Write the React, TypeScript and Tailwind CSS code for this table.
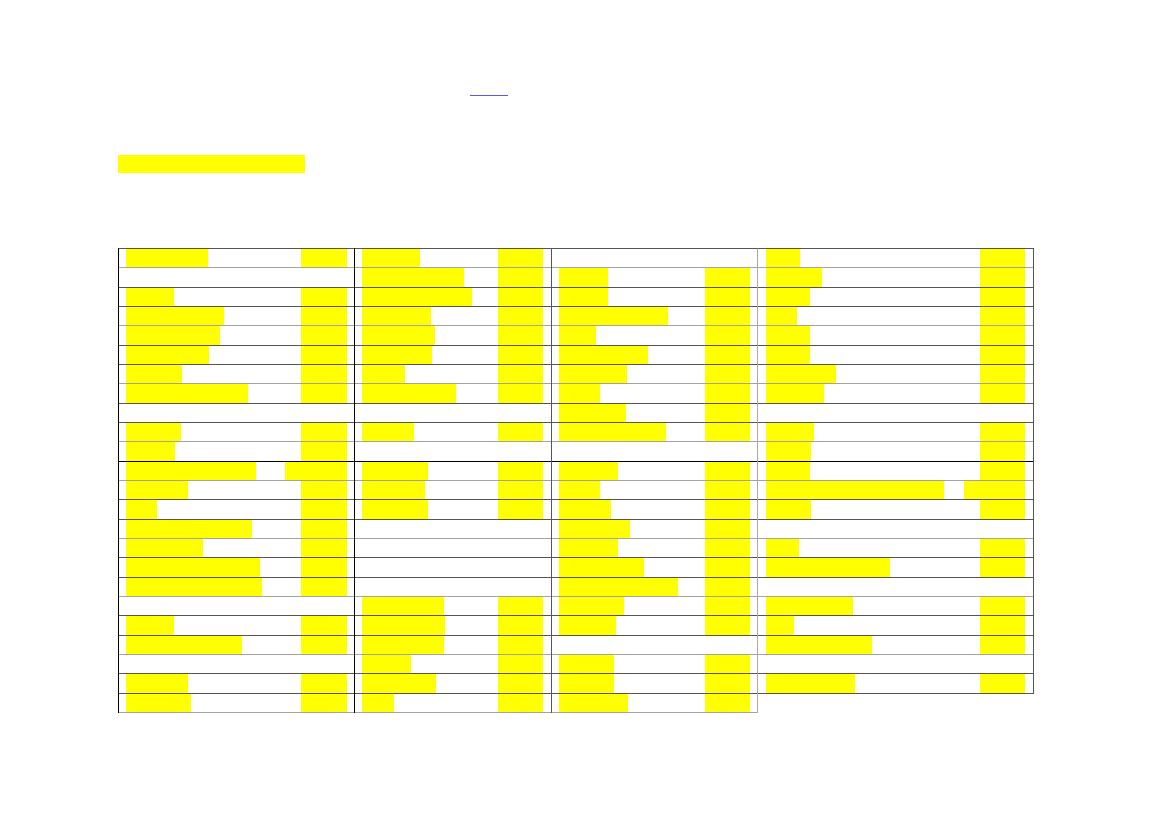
import React from "react";

type Cell = [number, number] | null;

type Group = {
  left: number;
  width: number;
  barStart: number;
  barEnd: number;
  hasLeft: boolean;
  borderCls: string;
  rows: Cell[];
};

// [leftBarEndX, rightBarStartX] in page pixel coordinates, null = empty row
const groups: Group[] = [
  {
    left: 118,
    width: 236,
    barStart: 126,
    barEnd: 347,
    hasLeft: true,
    borderCls: "border-l border-l-black",
    rows: [
      [208, 301], null, [174, 301], [224, 301], [220, 301], [209, 301], [182, 301], [248, 301],
      null, [181, 301], [175, 301], [256, 285], [188, 301], [157, 301], [252, 301], [203, 301],
      [260, 301], [262, 301], null, [174, 301], [242, 301], null, [188, 301], [191, 301],
    ],
  },
  {
    left: 354,
    width: 197,
    barStart: 362,
    barEnd: 543,
    hasLeft: true,
    borderCls: "border-l border-l-black",
    rows: [
      [420, 498], [464, 498], [472, 498], [431, 498], [435, 498], [432, 498], [405, 498], [456, 498],
      null, [414, 498], null, [428, 498], [425, 498], [428, 498], null, null,
      null, null, [444, 498], [445, 498], [444, 498], [411, 498], [436, 498], [394, 498],
    ],
  },
  {
    left: 551,
    width: 207,
    barStart: 559,
    barEnd: 750,
    hasLeft: true,
    borderCls: "border-l border-l-[#555555] border-r border-r-[#a8a8a8]",
    rows: [
      null, [608, 705], [608, 705], [668, 705], [596, 705], [648, 705], [627, 705], [600, 705],
      [626, 705], [666, 705], null, [618, 705], [600, 705], [611, 705], [630, 705], [618, 705],
      [644, 705], [678, 705], [624, 705], [616, 705], null, [614, 705], [614, 705], [628, 705],
    ],
  },
  {
    left: 758,
    width: 276,
    barStart: 766,
    barEnd: 1025,
    hasLeft: false,
    borderCls: "border-r border-r-[#555555]",
    rows: [
      [800, 980], [822, 980], [810, 980], [797, 980], [810, 980], [810, 980], [836, 980], [824, 980],
      null, [814, 980], [811, 980], [810, 980], [944, 964], [811, 980], null, [799, 980],
      [890, 980], null, [853, 980], [794, 980], [872, 980], null, [855, 980],
    ],
  },
];

const lightRows = new Set([0, 3, 6, 9, 11, 14, 17, 20, 23]);

function rowBorder(i: number) {
  if (i === 10) return "border-b-black";
  if (lightRows.has(i)) return "border-b-[#a3a3a3]";
  return "border-b-[#555555]";
}

function GroupTable({ g }: { g: Group }) {
  const off = g.hasLeft ? 1 : 0;
  return (
    <div
      className={`flex flex-col self-start border-t border-t-[#555555] ${g.borderCls}`}
      style={{ width: g.width }}
    >
      {g.rows.map((r, i) => (
        <div key={i} className={`relative box-border h-[19.333px] border-b ${rowBorder(i)}`}>
          {r && (
            <>
              <div
                className="absolute top-0 bottom-0 bg-[#ffff00]"
                style={{ left: g.barStart - g.left - off, width: r[0] - g.barStart }}
              />
              <div
                className="absolute top-0 bottom-0 bg-[#ffff00]"
                style={{ left: r[1] - g.left - off, width: g.barEnd - r[1] }}
              />
            </>
          )}
        </div>
      ))}
    </div>
  );
}

export default function App() {
  return (
    <div className="min-h-[827px] w-[1169px] bg-white font-['Liberation_Sans',sans-serif]">
      <div className="flex flex-col pl-[118px] pt-[95px]">
        <div className="ml-[352px] h-px w-[38px] bg-[#5a5ae6]" />
        <div className="mt-[59px] h-[18px] w-[187px] bg-[#ffff00]" />
        <div className="mt-[75px] flex flex-row">
          {groups.map((g, i) => (
            <GroupTable key={i} g={g} />
          ))}
        </div>
      </div>
    </div>
  );
}
